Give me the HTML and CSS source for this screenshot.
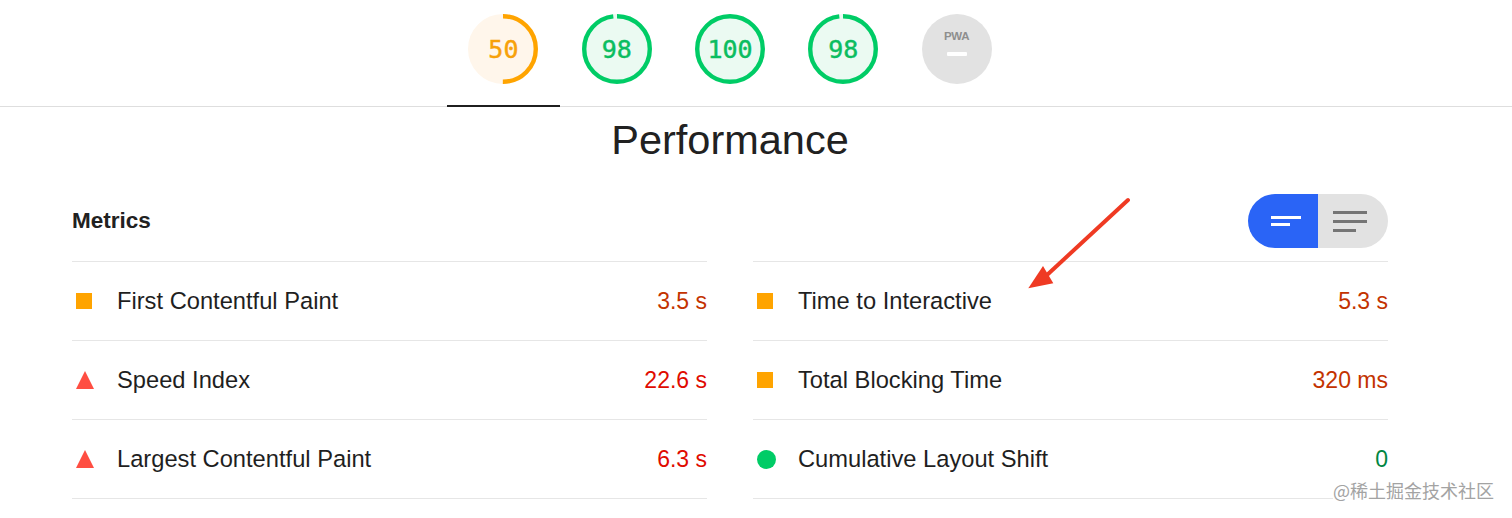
FILE: index.html
```html
<!DOCTYPE html>
<html lang="en">
<head>
<meta charset="utf-8">
<title>Lighthouse – Performance</title>
<link rel="stylesheet" href="styles.css">
</head>
<body>
<header class="topbar">
  <nav class="tabs">
    <div class="tab tab--active">
      <div class="gauge gauge--avg">
        <svg viewBox="0 0 70 70"><circle cx="35" cy="35" r="32.8" fill="#fff6eb" stroke="#fff6eb" stroke-width="4.4"/><circle cx="35" cy="35" r="32.8" fill="none" stroke="#ffa400" stroke-width="4.4" stroke-dasharray="103.05 206.1" transform="rotate(-90 35 35)"/></svg>
        <span class="gauge__num">50</span>
      </div>
    </div>
    <div class="tab">
      <div class="gauge gauge--pass">
        <svg viewBox="0 0 70 70"><circle cx="35" cy="35" r="32.8" fill="#ebfaf2" stroke="#ebfaf2" stroke-width="4.4"/><circle cx="35" cy="35" r="32.8" fill="none" stroke="#0c6" stroke-width="4.4" stroke-dasharray="202 206.1" transform="rotate(-90 35 35)"/></svg>
        <span class="gauge__num">98</span>
      </div>
    </div>
    <div class="tab">
      <div class="gauge gauge--pass">
        <svg viewBox="0 0 70 70"><circle cx="35" cy="35" r="32.8" fill="#ebfaf2" stroke="#0c6" stroke-width="4.4"/></svg>
        <span class="gauge__num">100</span>
      </div>
    </div>
    <div class="tab">
      <div class="gauge gauge--pass">
        <svg viewBox="0 0 70 70"><circle cx="35" cy="35" r="32.8" fill="#ebfaf2" stroke="#ebfaf2" stroke-width="4.4"/><circle cx="35" cy="35" r="32.8" fill="none" stroke="#0c6" stroke-width="4.4" stroke-dasharray="202 206.1" transform="rotate(-90 35 35)"/></svg>
        <span class="gauge__num">98</span>
      </div>
    </div>
    <div class="tab">
      <div class="gauge gauge--na">
        <svg viewBox="0 0 70 70"><circle cx="35" cy="35" r="35" fill="#e2e2e2"/></svg>
        <div class="pwa">
          <span class="pwa__label">PWA</span>
          <span class="pwa__dash"></span>
        </div>
      </div>
    </div>
  </nav>
</header>

<main class="page">
  <h1 class="title">Performance</h1>
  <section class="metrics">
    <div class="metrics__head">
      <h2 class="metrics__title">Metrics</h2>
      <div class="toggle">
        <div class="toggle__btn toggle__btn--on">
          <svg width="30" height="10" viewBox="0 0 30 10"><rect x="0" y="0" width="30" height="3" fill="#fff"/><rect x="0" y="7" width="19" height="3" fill="#fff"/></svg>
        </div>
        <div class="toggle__btn toggle__btn--off">
          <svg width="34" height="21" viewBox="0 0 34 21"><rect x="0" y="0" width="34" height="3" fill="#757575"/><rect x="0" y="9" width="34" height="3" fill="#757575"/><rect x="0" y="18" width="23" height="3" fill="#757575"/></svg>
        </div>
      </div>
    </div>

    <div class="grid">
      <div class="col">
        <div class="row">
          <span class="icon"><span class="sq"></span></span>
          <span class="label">First Contentful Paint</span>
          <span class="value value--avg">3.5&nbsp;s</span>
        </div>
        <div class="row">
          <span class="icon"><span class="tri"></span></span>
          <span class="label">Speed Index</span>
          <span class="value value--fail">22.6&nbsp;s</span>
        </div>
        <div class="row">
          <span class="icon"><span class="tri"></span></span>
          <span class="label">Largest Contentful Paint</span>
          <span class="value value--fail">6.3&nbsp;s</span>
        </div>
      </div>
      <div class="col">
        <div class="row">
          <span class="icon"><span class="sq"></span></span>
          <span class="label">Time to Interactive</span>
          <span class="value value--avg">5.3&nbsp;s</span>
        </div>
        <div class="row">
          <span class="icon"><span class="sq"></span></span>
          <span class="label">Total Blocking Time</span>
          <span class="value value--avg">320&nbsp;ms</span>
        </div>
        <div class="row">
          <span class="icon"><span class="dot"></span></span>
          <span class="label">Cumulative Layout Shift</span>
          <span class="value value--pass">0</span>
        </div>
      </div>
    </div>
  </section>
</main>

<svg class="arrow" width="115" height="100" viewBox="0 0 115 100">
  <line x1="108" y1="5" x2="27" y2="80" stroke="#ef3a23" stroke-width="4" stroke-linecap="round"/>
  <polygon points="8.3,93.3 23,71 33.3,88.3" fill="#ef3a23"/>
</svg>

<div class="watermark">@稀土掘金技术社区</div>
</body>
</html>
```

FILE: styles.css
```css
* { box-sizing: border-box; }

body {
  margin: 0;
  height: 518px;
  overflow: hidden;
  position: relative;
  background: #fff;
  color: #1f1f1f;
  font-family: "Liberation Sans", Arial, "Noto Sans CJK SC", sans-serif;
}

/* ---------- top tab bar with gauges ---------- */
.topbar {
  height: 107px;
  border-bottom: 1px solid #dedede;
}

.tabs {
  width: 1460px;
  height: 106px;
  display: flex;
  justify-content: center;
}

.tab {
  width: 113.3px;
  height: 107px;
  padding-top: 14px;
  display: flex;
  justify-content: center;
  align-items: flex-start;
  flex: none;
}

.tab--active {
  border-bottom: 2px solid #1f1f1f;
}

.gauge {
  width: 70px;
  height: 70px;
  display: grid;
  place-items: center;
}

.gauge > * {
  grid-area: 1 / 1;
}

.gauge svg {
  width: 70px;
  height: 70px;
  display: block;
}

.gauge__num {
  font-family: "DejaVu Sans Mono", "Liberation Mono", monospace;
  font-size: 25px;
  line-height: 1;
  -webkit-text-stroke: 0.45px currentColor;
}

.gauge--avg .gauge__num { color: #f7a10a; }
.gauge--pass .gauge__num { color: #0bbd60; }

.pwa {
  align-self: start;
  margin-top: 17px;
  display: flex;
  flex-direction: column;
  align-items: center;
  gap: 11px;
}

.pwa__label {
  font-size: 11.5px;
  line-height: 10px;
  font-weight: 700;
  color: #8e8e8e;
  letter-spacing: -0.4px;
}

.pwa__dash {
  width: 20px;
  height: 4px;
  border-radius: 1px;
  background: #fff;
}

/* ---------- page content ---------- */
.page {
  width: 1460px;
}

.title {
  margin: 9px 0 0;
  font-size: 41.5px;
  line-height: 48px;
  font-weight: 400;
  text-align: center;
  color: #212121;
}

.metrics {
  padding: 30px 72px 0;
}

.metrics__head {
  height: 54px;
  margin-bottom: 13px;
  display: flex;
  align-items: center;
  justify-content: space-between;
}

.metrics__title {
  margin: 0;
  font-size: 22.5px;
  font-weight: 700;
  color: #212121;
}

.toggle {
  width: 140px;
  height: 54px;
  border-radius: 27px;
  overflow: hidden;
  display: flex;
}

.toggle__btn {
  width: 70px;
  display: flex;
  align-items: center;
  justify-content: center;
}

.toggle__btn svg { display: block; }

.toggle__btn--on {
  background: #2a64f6;
  padding-left: 6px;
}

.toggle__btn--off {
  background: #e2e2e2;
  padding-right: 6px;
}

.grid {
  display: grid;
  grid-template-columns: 1fr 1fr;
  column-gap: 46px;
}

.row {
  height: 79px;
  display: flex;
  align-items: center;
  border-top: 1px solid #e6e6e6;
  font-size: 23px;
}

.row:last-child {
  height: 80px;
  border-bottom: 1px solid #e6e6e6;
}

.icon {
  width: 20px;
  margin-left: 4px;
  margin-right: 21px;
  display: flex;
  align-items: center;
}

.sq {
  width: 16px;
  height: 16px;
  background: #ffa400;
}

.tri {
  width: 0;
  height: 0;
  border-left: 9.5px solid transparent;
  border-right: 9.5px solid transparent;
  border-bottom: 18px solid #ff4e42;
}

.dot {
  width: 19px;
  height: 19px;
  border-radius: 50%;
  background: #0c6;
}

.label {
  flex: 1;
  font-size: 23.7px;
  color: #1f1f1f;
}

.value { text-align: right; }
.value--avg { color: #c33300; }
.value--fail { color: #e00b00; }
.value--pass { color: #018642; }

/* ---------- overlays ---------- */
.arrow {
  position: absolute;
  left: 1020px;
  top: 195px;
}

.watermark {
  position: absolute;
  right: 18px;
  top: 481px;
  font-family: "Noto Sans CJK SC", sans-serif;
  font-size: 18px;
  line-height: 1.1;
  color: #a3a3a3;
  background: rgba(255, 255, 255, 0.92);
}
```
